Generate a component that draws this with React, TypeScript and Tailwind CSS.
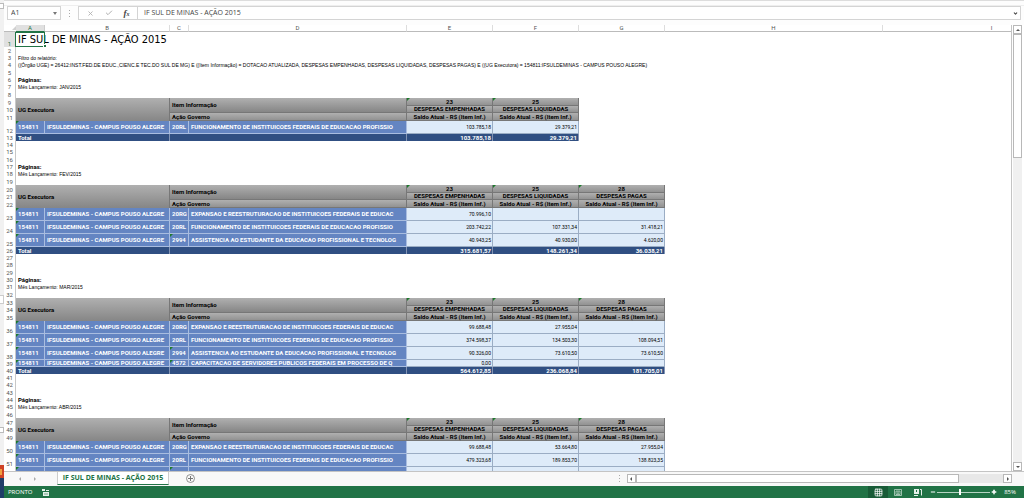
import { Check, ChevronDown, Grid3x3, Minus, Plus, X } from "lucide-react";
import clsx from "clsx";

type Entry = { code: string; name: string; values: string[]; short?: boolean };
type Month = {
  label: string;
  start: number;
  entries: Entry[];
  totals?: string[];
};

const expansao = "EXPANSAO E REESTRUTURACAO DE INSTITUICOES FEDERAIS DE EDUCAC";
const funcionamento = "FUNCIONAMENTO DE INSTITUICOES FEDERAIS DE EDUCACAO PROFISSIO";
const assistencia = "ASSISTENCIA AO ESTUDANTE DA EDUCACAO PROFISSIONAL E TECNOLOG";
const capacitacao = "CAPACITACAO DE SERVIDORES PUBLICOS FEDERAIS EM PROCESSO DE Q";

const expenses = [
  { id: "23", name: "DESPESAS EMPENHADAS" },
  { id: "25", name: "DESPESAS LIQUIDADAS" },
  { id: "28", name: "DESPESAS PAGAS" },
];

const months: Month[] = [
  {
    label: "JAN/2015",
    start: 9,
    entries: [{ code: "20RL", name: funcionamento, values: ["103.785,18", "29.379,21"] }],
    totals: ["103.785,18", "29.379,21"],
  },
  {
    label: "FEV/2015",
    start: 20,
    entries: [
      { code: "20RG", name: expansao, values: ["70.996,10", "", ""] },
      { code: "20RL", name: funcionamento, values: ["203.742,22", "107.331,34", "31.418,21"] },
      { code: "2994", name: assistencia, values: ["40.943,25", "40.930,00", "4.620,00"] },
    ],
    totals: ["315.681,57", "148.261,34", "36.038,21"],
  },
  {
    label: "MAR/2015",
    start: 33,
    entries: [
      { code: "20RG", name: expansao, values: ["99.688,48", "27.955,04", ""] },
      { code: "20RL", name: funcionamento, values: ["374.598,37", "134.503,30", "108.094,51"] },
      { code: "2994", name: assistencia, values: ["90.326,00", "73.610,50", "73.610,50"] },
      { code: "4572", name: capacitacao, values: ["0,00", "", ""], short: true },
    ],
    totals: ["564.612,85", "236.068,84", "181.705,01"],
  },
  {
    label: "ABR/2015",
    start: 47,
    entries: [
      { code: "20RG", name: expansao, values: ["99.688,48", "53.664,80", "27.955,04"] },
      { code: "20RL", name: funcionamento, values: ["479.323,68", "189.853,70", "138.823,35"] },
      { code: "2994", name: assistencia, values: ["174.034,80", "174.034,80", "174.034,80"] },
    ],
  },
];

const columns = ["A", "B", "C", "D", "E", "F", "G", "H", "I"];

function Flag() {
  return (
    <svg viewBox="0 0 3 3" className="absolute top-0 left-0 size-[3px]" aria-hidden="true">
      <path d="M0 0h3L0 3z" fill="#1d7a2c" />
    </svg>
  );
}

function RowNumber({ n, active }: { n: number; active?: boolean }) {
  return (
    <th
      scope="row"
      className={clsx(
        "border-r border-[#c8c8c8] p-0 text-center align-bottom font-normal",
        active ? "bg-[#e0e0e0] text-[#217346]" : "bg-white text-[#555]"
      )}
    >
      {n}
    </th>
  );
}

function BlankRow({ n, tall }: { n: number; tall?: boolean }) {
  return (
    <tr className={tall ? "h-[8px]" : "h-[7px]"}>
      <RowNumber n={n} />
      <td colSpan={9} className="p-0" />
    </tr>
  );
}

function TextRow({ n, bold, children }: { n: number; bold?: boolean; children: string }) {
  return (
    <tr className="h-[7px]">
      <RowNumber n={n} />
      <td
        colSpan={9}
        className={clsx(
          "p-0 pl-[2px] whitespace-nowrap text-black",
          bold ? "font-bold" : "font-['Liberation_Sans',sans-serif] text-[5px]"
        )}
      >
        {children}
      </td>
    </tr>
  );
}

const grayCell =
  "relative border-r border-b border-[#777] bg-linear-to-b from-[#b0b0b0] to-[#929292] p-0 whitespace-nowrap text-black";
const blueCell =
  "relative overflow-hidden border-r border-b border-[#a9bde0] bg-[#6485c2] p-0 pl-[2px] text-left font-bold whitespace-nowrap text-white";
const totalCell = "border-r border-[#8294b5] bg-[#304f82] p-0 font-bold text-white";

function MonthRows({ month }: { month: Month }) {
  const { start, entries, totals } = month;
  const count = entries[0].values.length;
  const shown = expenses.slice(0, count);

  return (
    <>
      <tr className="h-[8px]">
        <RowNumber n={start} />
        <th
          colSpan={2}
          rowSpan={3}
          className="border-r border-[#777] bg-linear-to-b from-[#b0b0b0] to-[#868686] p-0 pl-[2px] text-left text-black"
        >
          UG Executora
        </th>
        <th
          colSpan={2}
          rowSpan={2}
          className="border-r border-b border-[#777] bg-linear-to-b from-[#b0b0b0] to-[#868686] p-0 pl-[2px] text-left text-black"
        >
          Item Informação
        </th>
        {shown.map((e) => (
          <th key={e.id} className={grayCell}>
            <Flag />
            {e.id}
          </th>
        ))}
      </tr>
      <tr className="h-[7px]">
        <RowNumber n={start + 1} />
        {shown.map((e) => (
          <th key={e.id} className={grayCell}>
            {e.name}
          </th>
        ))}
      </tr>
      <tr className="h-[8px]">
        <RowNumber n={start + 2} />
        <th colSpan={2} className={clsx(grayCell, "pl-[2px] text-left")}>
          Ação Governo
        </th>
        {shown.map((e) => (
          <th key={e.id} className={grayCell}>
            Saldo Atual - R$ (Item Inf.)
          </th>
        ))}
      </tr>
      {entries.map((entry, i) => (
        <tr key={entry.code} className={entry.short ? "h-[7px]" : "h-[13px]"}>
          <RowNumber n={start + 3 + i} />
          <td className={blueCell}>
            <Flag />
            154811
          </td>
          <td className={blueCell}>IFSULDEMINAS - CAMPUS POUSO ALEGRE</td>
          <td className={blueCell}>
            {/^\d+$/.test(entry.code) && <Flag />}
            {entry.code}
          </td>
          <td className={blueCell}>{entry.name}</td>
          {entry.values.map((value, v) => (
            <td
              key={v}
              className="border-r border-b border-[#9badc4] bg-[#deebf9] p-0 pr-[1px] text-right text-[5px] text-black"
            >
              {value}
            </td>
          ))}
        </tr>
      ))}
      {totals && (
        <tr className="h-[7px]">
          <RowNumber n={start + 3 + entries.length} />
          <td colSpan={2} className={clsx(totalCell, "pl-[2px]")}>
            Total
          </td>
          <td colSpan={2} className={totalCell} />
          {totals.map((value, v) => (
            <td key={v} className={clsx(totalCell, "pr-[1px] text-right")}>
              {value}
            </td>
          ))}
        </tr>
      )}
    </>
  );
}

function Sheet() {
  return (
    <table className="w-[1096px] table-fixed border-separate border-spacing-0 font-['Roboto',sans-serif] text-[6px] leading-[6px]">
      <colgroup>
        <col className="w-[12px]" />
        <col className="w-[29px]" />
        <col className="w-[125px]" />
        <col className="w-[19px]" />
        <col className="w-[218px]" />
        <col className="w-[86px]" />
        <col className="w-[86px]" />
        <col className="w-[86px]" />
        <col className="w-[218px]" />
        <col className="w-[218px]" />
      </colgroup>
      <thead>
        <tr className="h-[7px]">
          <td className="border-b border-[#bbb] p-0">
            <svg viewBox="0 0 6 6" className="ml-auto size-[4px]" aria-hidden="true">
              <path d="M6 0v6H0z" fill="#d0d0d0" />
            </svg>
          </td>
          {columns.map((c) => (
            <th
              key={c}
              scope="col"
              className={clsx(
                "border-r border-b p-0 text-center font-normal",
                c === "A"
                  ? "border-r-[#ccc] border-b-[#217346] bg-[#e0e0e0] text-[#217346]"
                  : "border-r-[#ddd] border-b-[#bbb] bg-white text-[#555]"
              )}
            >
              {c}
            </th>
          ))}
        </tr>
      </thead>
      <tbody>
        <tr className="h-[15px]">
          <RowNumber n={1} active />
          <td
            colSpan={9}
            className="relative p-0 pl-[2px] font-['DejaVu_Sans_Condensed','DejaVu_Sans',sans-serif] text-[11px] leading-[14px] whitespace-nowrap text-black"
          >
            IF SUL DE MINAS - AÇÃO 2015
            <span className="absolute inset-y-0 -left-px w-[30px] border border-[#217346]" />
            <span className="absolute bottom-0 left-[27px] size-[3px] border-t border-l border-white bg-[#217346]" />
          </td>
        </tr>
        <BlankRow n={2} />
        <TextRow n={3}>Filtro do relatório:</TextRow>
        <TextRow n={4}>
          ((Órgão UGE) = 26412:INST.FED.DE EDUC.,CIENC.E TEC.DO SUL DE MG) E ((Item Informação) = DOTACAO ATUALIZADA, DESPESAS EMPENHADAS, DESPESAS LIQUIDADAS, DESPESAS PAGAS) E ((UG Executora) = 154811:IFSULDEMINAS - CAMPUS POUSO ALEGRE)
        </TextRow>
        <BlankRow n={5} tall />
      </tbody>
      {months.map((month, i) => (
        <tbody key={month.label}>
          {i > 0 && (
            <>
              <BlankRow n={month.start - 6} />
              <BlankRow n={month.start - 5} />
              <BlankRow n={month.start - 4} tall />
            </>
          )}
          <TextRow n={month.start - 3} bold>
            Páginas:
          </TextRow>
          <TextRow n={month.start - 2}>{`Mês Lançamento: ${month.label}`}</TextRow>
          <BlankRow n={month.start - 1} tall />
          <MonthRows month={month} />
        </tbody>
      ))}
    </table>
  );
}

function FormulaBar() {
  return (
    <div className="flex h-[14px] gap-[8px] pr-[3px] pl-[3px] font-['Open_Sans',sans-serif] text-[7px] leading-[12px] text-[#444]">
      <div className="flex w-[54px] items-center border border-[#d4d4d4] bg-white">
        <input
          aria-label="Caixa de nome"
          defaultValue="A1"
          className="w-full min-w-0 bg-transparent pl-[3px] outline-none"
        />
        <button aria-label="Abrir lista de nomes" className="px-[3px]">
          <svg viewBox="0 0 4 3" className="h-[3px] w-[4px]">
            <path d="M0 0h4L2 3z" fill="#777" />
          </svg>
        </button>
      </div>
      <div className="flex items-center">
        <Dots />
      </div>
      <div className="flex min-w-0 flex-1">
        <div className="flex w-[60px] shrink-0 items-center justify-around border border-[#d4d4d4] bg-white px-[2px]">
          <button aria-label="Cancelar" className="text-[#b0b0b0]">
            <X size={7} strokeWidth={3} />
          </button>
          <button aria-label="Inserir" className="text-[#b0b0b0]">
            <Check size={8} strokeWidth={3} />
          </button>
          <button
            aria-label="Inserir função"
            className="font-['Liberation_Serif',serif] text-[9px] font-bold italic"
          >
            f<span className="text-[6px]">x</span>
          </button>
        </div>
        <div className="flex min-w-0 flex-1 items-center border border-l-0 border-[#d4d4d4] bg-white">
          <input
            aria-label="Barra de fórmulas"
            defaultValue="IF SUL DE MINAS - AÇÃO 2015"
            className="min-w-0 flex-1 bg-transparent pl-[6px] outline-none"
          />
          <button aria-label="Expandir barra de fórmulas" className="px-[2px]">
            <ChevronDown size={5} strokeWidth={5} />
          </button>
        </div>
      </div>
    </div>
  );
}

function Dots() {
  return (
    <svg viewBox="0 0 1 7" className="h-[7px] w-px" aria-hidden="true">
      <path d="M0 0h1v1H0zM0 3h1v1H0zM0 6h1v1H0z" fill="#aaa" />
    </svg>
  );
}

function ScrollButton({ label, d }: { label: string; d: string }) {
  return (
    <button
      aria-label={label}
      className="flex size-[9px] shrink-0 items-center justify-center border border-[#b8b8b8] bg-white"
    >
      <svg viewBox="0 0 4 4" className="size-[4px]">
        <path d={d} fill="#555" />
      </svg>
    </button>
  );
}

function VerticalScroll() {
  return (
    <div className="mr-[2px] ml-[1px] flex w-[9px] shrink-0 flex-col bg-[#f0f0f0]">
      <ScrollButton label="Rolar para cima" d="M2 1l2 2H0z" />
      <div className="flex-1">
        <div className="h-[29%] border border-[#b8b8b8] bg-white" />
      </div>
      <ScrollButton label="Rolar para baixo" d="M2 3l2-2H0z" />
    </div>
  );
}

function TabBar() {
  return (
    <div className="flex h-[15px] shrink-0 items-start border-t border-[#c4c4c4] bg-[#f8f8f8] pr-[12px]">
      <div className="flex h-[13px] w-[53px] items-center gap-[11px] pl-[14px] text-[#aaa]">
        <button aria-label="Planilha anterior">
          <svg viewBox="0 0 4 4" className="size-[4px]">
            <path d="M3 0v4L1 2z" fill="currentColor" />
          </svg>
        </button>
        <button aria-label="Próxima planilha">
          <svg viewBox="0 0 4 4" className="size-[4px]">
            <path d="M1 0v4l2-2z" fill="currentColor" />
          </svg>
        </button>
      </div>
      <button className="h-[13px] w-[112px] border-x border-b border-x-[#ccc] border-b-[#217346] bg-white text-center font-['Open_Sans',sans-serif] text-[7px] leading-[12px] font-bold whitespace-nowrap text-[#217346]">
        IF SUL DE MINAS - AÇÃO 2015
      </button>
      <button aria-label="Nova planilha" className="mt-[2px] ml-[17px]">
        <svg viewBox="0 0 9 9" className="size-[9px]" fill="none" stroke="#777">
          <circle cx="4.5" cy="4.5" r="4" strokeWidth=".8" />
          <path d="M4.500 2v5M2 4.500h5" />
        </svg>
      </button>
      <div className="ml-auto flex h-[13px] w-[39%] items-center">
        <Dots />
        <div className="ml-[7px] flex flex-1 bg-[#e8e8e8]">
          <ScrollButton label="Rolar para a esquerda" d="M1 2l2-2v4z" />
          <div className="h-[9px] w-[84%] border border-[#b8b8b8] bg-white" />
          <div className="flex-1" />
          <ScrollButton label="Rolar para a direita" d="M3 2L1 0v4z" />
        </div>
      </div>
    </div>
  );
}

function StatusBar() {
  return (
    <div className="flex h-[12px] shrink-0 items-center bg-[#217346] pr-[8px] pl-[4px] font-['Open_Sans',sans-serif] text-[6px] leading-[12px] text-white">
      <span>PRONTO</span>
      <button aria-label="Gravar macro" className="ml-[10px]">
        <svg viewBox="0 0 8 7" className="h-[7px] w-[8px]">
          <path d="M0 0h3v2H0zM4 1h3v1H4zM1 3h6v4H1z" fill="#e4f1e9" />
          <path d="M2 5h4" stroke="#217346" strokeWidth=".6" />
        </svg>
      </button>
      <div className="ml-auto flex items-center">
        <button
          aria-label="Normal"
          className="flex h-[12px] w-[20px] items-center justify-center bg-[#185c37]"
        >
          <Grid3x3 size={9} strokeWidth={2} />
        </button>
        <button aria-label="Layout da página" className="flex w-[20px] justify-center">
          <svg viewBox="0 0 8 7" className="h-[7px] w-[8px]" fill="none" stroke="#cfe3d7">
            <path d="M.5.5h7v6h-7zM2 2h4v3.500H2zM3 3h2M3 4.300h2" strokeWidth=".7" />
          </svg>
        </button>
        <button
          aria-label="Visualização da quebra de página"
          className="flex w-[20px] justify-center"
        >
          <svg viewBox="0 0 8 7" className="h-[7px] w-[8px]" fill="none" stroke="#e4f1e9">
            <path d="M0 0h5v5H0z" fill="#e4f1e9" stroke="none" />
            <path d="M2.500 1v2" stroke="#217346" />
            <path d="M6 .5h1.500v6M0 6.500h4" />
          </svg>
        </button>
        <button aria-label="Reduzir" className="ml-[2px]">
          <Minus size={6} strokeWidth={4} />
        </button>
        <input
          type="range"
          aria-label="Zoom"
          min={10}
          max={187}
          defaultValue={85}
          className="mx-[1px] h-[7px] w-[53px] appearance-none bg-[linear-gradient(#b7d4c3,#b7d4c3)] bg-[length:100%_1px] bg-center bg-no-repeat [&::-webkit-slider-thumb]:h-[6px] [&::-webkit-slider-thumb]:w-[2px] [&::-webkit-slider-thumb]:appearance-none [&::-webkit-slider-thumb]:bg-white"
        />
        <button aria-label="Ampliar">
          <Plus size={6} strokeWidth={6} />
        </button>
        <span className="ml-[7px]">85%</span>
      </div>
    </div>
  );
}

// Sliver of the window that stays visible behind the spreadsheet
function BackWindow() {
  return (
    <div className="flex w-[4px] shrink-0 flex-col bg-[#f1f1f1]">
      <div className="mt-[3px] h-[6px] border-y border-r border-[#bbb] bg-white" />
      <div className="flex-[286]" />
      <div className="h-[9px] border-y border-r border-[#ccc] bg-white" />
      <div className="flex-[123]" />
      <div className="h-[6px] border-y border-r border-[#bbb] bg-white" />
      <div className="flex-[32]" />
      <div className="flex h-[13px] items-center bg-[#cf4326]">
        <div className="h-[6px] w-[2px] bg-[#f0a040]" />
      </div>
      <div className="h-[20px] bg-[#1f3d68]" />
    </div>
  );
}

export default function App() {
  return (
    <div className="flex h-screen overflow-hidden bg-white">
      <BackWindow />
      <div className="flex min-w-0 flex-1 flex-col">
        <div className="border-t border-[#ddd] bg-[#fdfdfd] pt-[4px] pb-[5px]">
          <div className="border-t border-[#eee]">
            <FormulaBar />
          </div>
        </div>
        <div className="flex min-h-0 flex-1 bg-white">
          <div className="min-w-0 flex-1 overflow-hidden border-r border-[#c4c4c4]">
            <Sheet />
          </div>
          <VerticalScroll />
        </div>
        <TabBar />
        <StatusBar />
      </div>
    </div>
  );
}
